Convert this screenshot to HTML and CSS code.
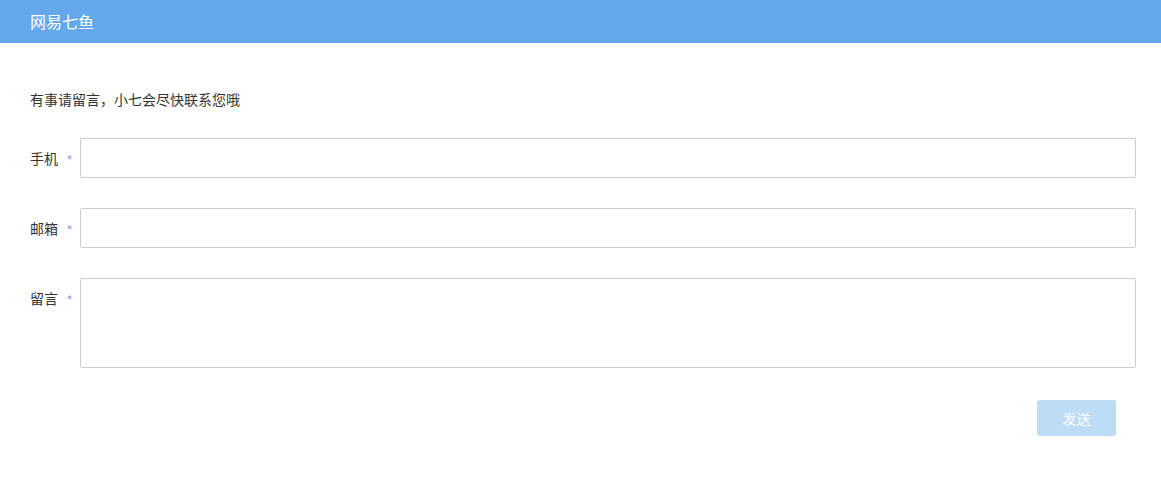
FILE: index.html
```html
<!DOCTYPE html>
<html lang="zh-CN">
<head>
    <meta charset="UTF-8">
    <title>网易七鱼</title>
    <link rel="stylesheet" href="styles.css">
</head>
<body>

<div class="header">网易七鱼</div>

<div class="content">
    <p class="tip">有事请留言，小七会尽快联系您哦</p>

    <form class="leave-form">
        <div class="row">
            <label class="label">手机 <span class="star">*</span></label>
            <input class="field" type="text">
        </div>
        <div class="row">
            <label class="label">邮箱 <span class="star">*</span></label>
            <input class="field" type="text">
        </div>
        <div class="row">
            <label class="label">留言 <span class="star">*</span></label>
            <textarea class="field area"></textarea>
        </div>
        <div class="actions">
            <button type="button" class="send" disabled>发送</button>
        </div>
    </form>
</div>

</body>
</html>
```

FILE: styles.css
```css
body {
    margin: 0;
    font-family: "Noto Sans CJK SC", "Liberation Sans", sans-serif;
    color: #333;
    background: #fff;
}
.header {
    height: 43px;
    line-height: 43px;
    padding-left: 30px;
    background: #63a8ea;
    color: #fff;
    font-size: 16px;
}
.content {
    padding: 45px 25px 0 30px;
}
.tip {
    margin: 0 0 28px;
    font-size: 14px;
    line-height: 22px;
}
.row {
    display: flex;
    align-items: flex-start;
    margin-bottom: 30px;
}
.label {
    width: 50px;
    height: 40px;
    flex-shrink: 0;
    font-size: 14px;
    line-height: 40px;
    white-space: nowrap;
}
.star {
    color: #8fa9dc;
    margin-left: 5px;
    line-height: 1;
    vertical-align: -2px;
}
.field {
    flex: 1;
    height: 40px;
    box-sizing: border-box;
    border: 1px solid #ccc;
    border-radius: 2px;
    padding: 6px 10px;
    font-size: 14px;
    outline: none;
}
.area {
    height: 90px;
    resize: none;
    font-family: inherit;
    display: block;
}
.actions {
    display: flex;
    justify-content: flex-end;
    padding-right: 20px;
    margin-top: 32px;
}
.send {
    width: 79px;
    height: 36px;
    border: none;
    border-radius: 3px;
    background: #bddcf6;
    color: #fff;
    font-size: 14px;
    font-family: inherit;
}
```
